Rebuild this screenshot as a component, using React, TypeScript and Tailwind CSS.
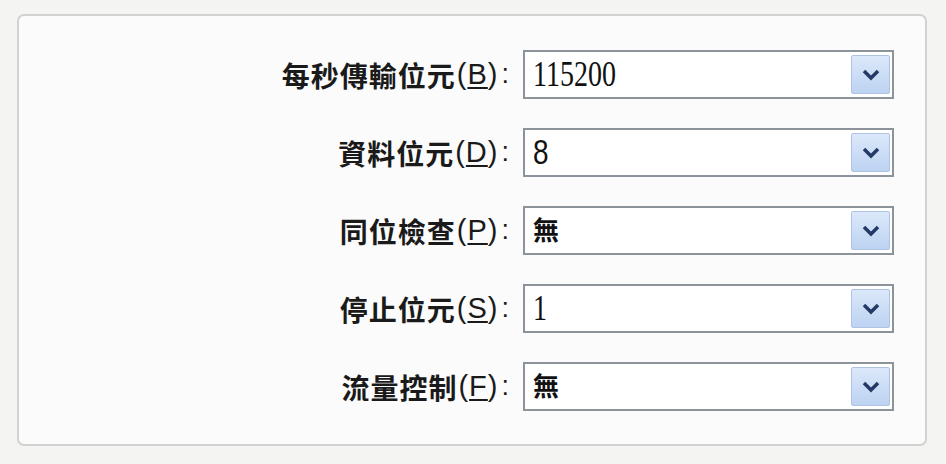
import { ReactNode } from "react";

const rows: { label: string; key: string; value: string; serif?: boolean; cjk?: boolean }[] = [
  { label: "每秒傳輸位元", key: "B", value: "115200", serif: true },
  { label: "資料位元", key: "D", value: "8" },
  { label: "同位檢查", key: "P", value: "無", cjk: true },
  { label: "停止位元", key: "S", value: "1", serif: true },
  { label: "流量控制", key: "F", value: "無", cjk: true },
];

const Chevron = () => (
  <svg width="18" height="12" viewBox="0 0 18 12">
    <path d="M2 2 L9 9 L16 2" fill="none" stroke="#243a66" strokeWidth="3.5" strokeLinejoin="miter" />
  </svg>
);

const Select = ({ children }: { children: ReactNode }) => (
  <div className="w-[371px] h-[49px] border-2 border-[#8d939b] bg-white flex items-center pl-2 pr-[2px]">
    <div className="flex-1 text-[#111]">{children}</div>
    <div className="w-[39px] h-[39px] rounded-[2px] border border-[#aec3e4] bg-gradient-to-b from-[#dce8fa] to-[#bcd3f2] flex items-center justify-center">
      <Chevron />
    </div>
  </div>
);

export default function App() {
  return (
    <div className="w-[946px] h-[464px] bg-[#f4f4f3] pt-[14px] pl-[17px] font-['Noto_Sans_CJK_TC',sans-serif]">
      <div className="w-[910px] h-[432px] rounded-[7px] border-2 border-[#d2d2d0] bg-[#fbfbfb] pr-[31px] pt-[34px] flex flex-col items-end gap-[29px]">
        {rows.map((r) => (
          <div key={r.key} className="flex items-center">
            <span className="flex items-center text-[28px] font-bold text-[#1a1a1a] mr-[14px] leading-none">
              <span className="tracking-[1px]">{r.label}</span>
              <span className="ml-[1px] font-['Liberation_Sans',sans-serif] font-normal text-[29px] inline-block tracking-[1px]">
                (<span className="underline underline-offset-[3px] decoration-[2px]">{r.key}</span>)
              </span>
              <span className="font-['Liberation_Sans',sans-serif] font-normal text-[27px] ml-[3px]">:</span>
            </span>
            <Select>
              {r.cjk ? (
                <span className="text-[26px] font-bold leading-none">{r.value}</span>
              ) : (
                <span
                  className={
                    (r.serif ? "font-['Liberation_Serif',serif] " : "font-['Liberation_Sans',sans-serif] ") +
                    "inline-block text-[28px] leading-none scale-y-[1.25]"
                  }
                >
                  {r.value}
                </span>
              )}
            </Select>
          </div>
        ))}
      </div>
    </div>
  );
}
